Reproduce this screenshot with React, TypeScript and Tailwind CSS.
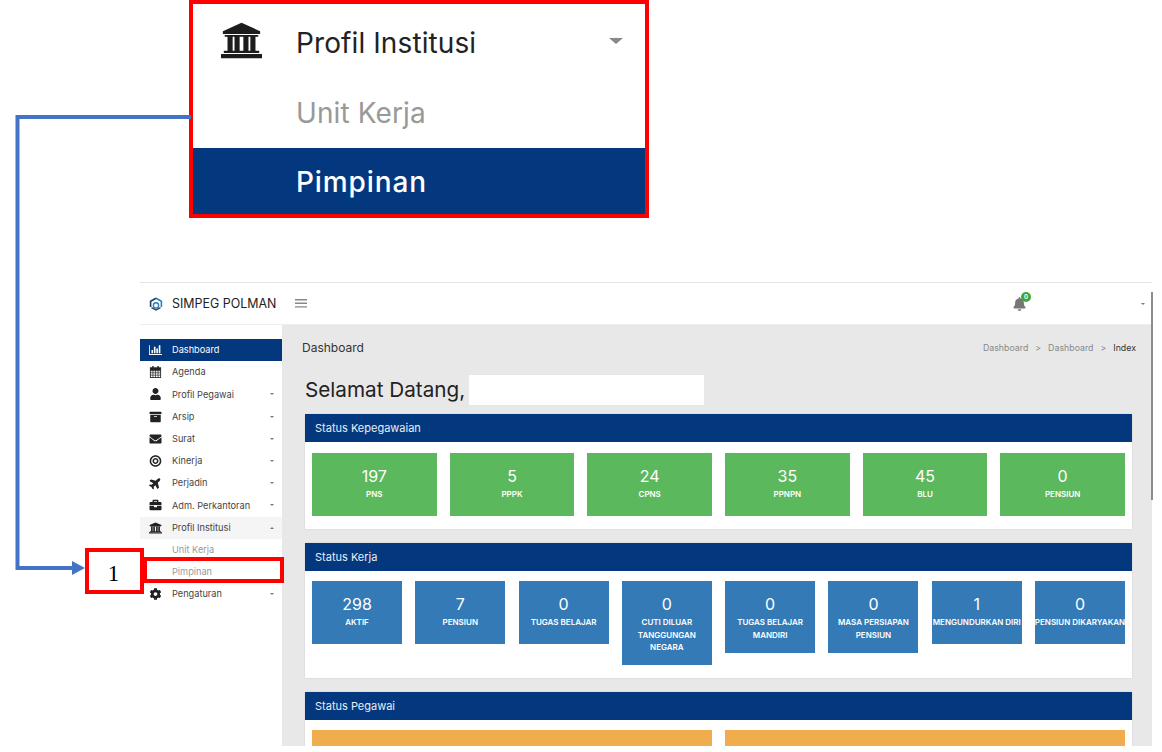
import { FaArchive, FaBell, FaBriefcase, FaBullseye, FaCog, FaEnvelope, FaPlane, FaUser } from 'react-icons/fa'
import type { IconType } from 'react-icons'

const BarChart: IconType = (props) => (
  <svg viewBox="0 0 16 14" fill="currentColor" {...(props as object)}>
    <path d="M0 1h1v11h15v1H0z" />
    <path d="M3 7h2v4H3zM6 3h2v8H6zM9 5h2v6H9zM12 1h2v10h-2z" />
  </svg>
)

const CalendarGrid: IconType = (props) => (
  <svg viewBox="0 0 14 14" fill="none" stroke="currentColor" strokeWidth="1" {...(props as object)}>
    <rect x="1" y="2" width="12" height="11.5" />
    <path d="M1 5.5h12M1 8h12M1 10.7h12M4 5.5v8M7 5.5v8M10 5.5v8" strokeWidth="0.8" />
    <path d="M1 3.8h12" strokeWidth="3" />
    <path d="M4 0v3M10 0v3" strokeWidth="1.6" />
  </svg>
)

const Bank: IconType = (props) => (
  <svg viewBox="0 0 44 38" fill="currentColor" {...(props as object)}>
    <path d="M22 0 42 9v3H2V9z" />
    <path d="M4 13h36v2H4zM7 15h5.5v15H7zM14.5 15h5.5v15h-5.5zM24 15h5.5v15H24zM31.5 15H37v15h-5.5zM3 30h38v2.5H3zM0 33.5h44V38H0z" />
  </svg>
)

const TiltedPlane: IconType = (props) => <FaPlane {...props} className={`${props.className ?? ''} -rotate-45`} />

const menu: { label: string; icon: IconType; caret?: boolean }[] = [
  { label: 'Dashboard', icon: BarChart },
  { label: 'Agenda', icon: CalendarGrid },
  { label: 'Profil Pegawai', icon: FaUser, caret: true },
  { label: 'Arsip', icon: FaArchive, caret: true },
  { label: 'Surat', icon: FaEnvelope, caret: true },
  { label: 'Kinerja', icon: FaBullseye, caret: true },
  { label: 'Perjadin', icon: TiltedPlane, caret: true },
  { label: 'Adm. Perkantoran', icon: FaBriefcase, caret: true },
]

const kepegawaian = [
  { value: '197', label: 'PNS' },
  { value: '5', label: 'PPPK' },
  { value: '24', label: 'CPNS' },
  { value: '35', label: 'PPNPN' },
  { value: '45', label: 'BLU' },
  { value: '0', label: 'PENSIUN' },
]

const kerja = [
  { value: '298', label: 'AKTIF' },
  { value: '7', label: 'PENSIUN' },
  { value: '0', label: 'TUGAS BELAJAR' },
  { value: '0', label: 'CUTI DILUAR\nTANGGUNGAN\nNEGARA' },
  { value: '0', label: 'TUGAS BELAJAR\nMANDIRI' },
  { value: '0', label: 'MASA PERSIAPAN\nPENSIUN' },
  { value: '1', label: 'MENGUNDURKAN DIRI' },
  { value: '0', label: 'PENSIUN DIKARYAKAN' },
]

function Caret({ up }: { up?: boolean }) {
  return (
    <span
      className={`h-0 w-0 border-x-[2px] border-x-transparent ${up ? 'border-b-[2px] border-b-[#777]' : 'border-t-[2px] border-t-[#777]'}`}
    />
  )
}

function MenuItem({ label, icon: Icon, caret, active }: { label: string; icon: IconType; caret?: boolean; active?: boolean }) {
  return (
    <div className={`flex h-[22.2px] items-center pl-[9px] pr-[8px] text-[9.2px] ${active ? 'bg-[#03387f] text-white' : 'text-[#444]'}`}>
      <Icon className={`h-[12px] w-[13px] shrink-0 ${active ? 'text-white' : 'text-[#222]'}`} />
      <span className="ml-[10px] flex-1">{label}</span>
      {caret && <Caret />}
    </div>
  )
}

function Card({ title, children }: { title: string; children: React.ReactNode }) {
  return (
    <div className="mb-[14px] rounded-t-[2px] bg-white shadow-[0_0_2px_rgba(0,0,0,0.12)]">
      <div className="flex h-[28px] items-center bg-[#03387f] px-[10px] pt-[1px] text-[11px] text-[#e8eef6]">{title}</div>
      {children}
    </div>
  )
}

function Tile({ value, label, color }: { value: string; label: string; color: string }) {
  return (
    <div className={`flex min-h-[63px] flex-col items-center pb-[11.5px] pt-[11px] text-center text-white ${color}`}>
      <div className="text-[16px] leading-[24px]">{value}</div>
      <div className="whitespace-pre text-[8px] font-semibold leading-[12.5px]">{label}</div>
    </div>
  )
}

export default function App() {
  return (
    <div className="relative h-[752px] w-[1162px] overflow-hidden bg-white font-['Inter',sans-serif]">
      {/* dashboard screenshot */}
      <div className="ml-[140px] mt-[282px] inline-block h-[464px] w-[1012px] overflow-hidden border-t border-[#e4e4e4] align-top">
        <header className="flex h-[42px] items-center border-b border-[#eee] bg-white pl-[9px] pr-[7px]">
          <svg viewBox="0 0 14 14" className="h-[14px] w-[14px]" fill="none">
            <path d="M7 1.2 12.4 4.3V10" stroke="#2f7fb8" strokeWidth="1.6" />
            <path d="M1.6 10V4.3L7 1.2" stroke="#23415f" strokeWidth="1.6" />
            <circle cx="7" cy="8.4" r="2.6" stroke="#2f7fb8" strokeWidth="1.4" />
            <path d="M2.5 10.6 7 13l4.5-2.4" stroke="#23415f" strokeWidth="1.2" />
          </svg>
          <span className="ml-[9px] pt-[1px] text-[12.45px] text-[#222]">SIMPEG POLMAN</span>
          <svg viewBox="0 0 12 9" className="ml-[18.5px] h-[9px] w-[12px]" fill="#888">
            <path d="M0 0h12v1.4H0zM0 3.6h12V5H0zM0 7.2h12v1.4H0z" />
          </svg>
          <div className="relative ml-auto mr-[115px]">
            <FaBell className="h-[14px] w-[13px] text-[#777]" />
            <span className="absolute -right-[5px] -top-[5px] flex h-[10px] w-[10px] items-center justify-center rounded-full bg-[#3aa83a] text-[6px] font-bold text-white">0</span>
          </div>
          <Caret />
        </header>

        <div className="flex h-[421px]">
          <aside className="w-[142px] shrink-0 bg-white pt-[14px]">
            {menu.map((item, i) => (
              <MenuItem key={item.label} {...item} active={i === 0} />
            ))}
            <div className="flex h-[22.2px] items-center bg-[#f5f5f5] pl-[9px] pr-[8px] text-[9.2px] text-[#444]">
              <Bank className="h-[12px] w-[13px] shrink-0 text-[#222]" />
              <span className="ml-[10px] flex-1">Profil Institusi</span>
              <Caret up />
            </div>
            <div className="flex h-[22.2px] items-center pl-[32px] text-[9.2px] text-[#999]">Unit Kerja</div>
            <div className="flex h-[22.2px] items-center pl-[32px] text-[9.2px] text-[#999]">Pimpinan</div>
            <MenuItem label="Pengaturan" icon={FaCog} caret />
          </aside>

          <main className="flex-1 overflow-hidden bg-[#e8e8e8]">
            <div className="flex h-[44px] items-center justify-between pl-[20px] pr-[16px] pt-[2px]">
              <span className="text-[12px] text-[#333]">Dashboard</span>
              <div className="flex items-center gap-[7px] text-[8.8px] text-[#888]">
                <span>Dashboard</span>
                <span>&gt;</span>
                <span>Dashboard</span>
                <span>&gt;</span>
                <span className="text-[#333]">Index</span>
              </div>
            </div>

            <div className="ml-[23px] mr-[20px] mt-[6px]">
              <div className="mb-[9px] flex h-[30px] items-center">
                <span className="text-[20.7px] text-[#222]">Selamat Datang,</span>
                <div className="ml-[4px] h-[30px] w-[235px] bg-white" />
              </div>

              <Card title="Status Kepegawaian">
                <div className="grid grid-cols-6 items-start gap-x-[13px] px-[7px] pb-[13px] pt-[10.5px]">
                  {kepegawaian.map((t) => (
                    <Tile key={t.label} {...t} color="bg-[#5cb85c]" />
                  ))}
                </div>
              </Card>

              <Card title="Status Kerja">
                <div className="grid grid-cols-8 items-start gap-x-[13.3px] px-[7px] pb-[13px] pt-[10.5px]">
                  {kerja.map((t) => (
                    <Tile key={t.label} {...t} color="bg-[#337ab7]" />
                  ))}
                </div>
              </Card>

              <Card title="Status Pegawai">
                <div className="grid grid-cols-2 gap-x-[13px] px-[7px] pt-[10px]">
                  <div className="h-[63px] bg-[#f0ad4e]" />
                  <div className="h-[63px] bg-[#f0ad4e]" />
                </div>
              </Card>
            </div>
          </main>
        </div>
      </div>

      {/* window scrollbar */}
      <div className="absolute left-[1151px] top-[292px] h-[208px] w-[2px] bg-[#8c8c8c]" />

      {/* enlarged menu callout */}
      <div className="absolute left-[189px] top-0 w-[460px] border-4 border-[#ff0000] bg-white">
        <div className="flex h-[78px] items-center pl-[28px] pr-[22px] text-[#222]">
          <Bank className="mb-[5px] h-[37px] w-[41px] text-[#1c1c1c]" />
          <span className="ml-[34px] flex-1 text-[28px] tracking-[0.1px]">Profil Institusi</span>
          <span className="mb-[4px] h-0 w-0 border-x-[7px] border-t-[6px] border-x-transparent border-t-[#888]" />
        </div>
        <div className="flex h-[66px] items-center pl-[103px] pb-[4px] text-[28px] tracking-[0.1px] text-[#999]">Unit Kerja</div>
        <div className="flex h-[66px] items-center bg-[#03387f] pl-[103px] pt-[1px] text-[28px] font-medium tracking-[0.9px] text-white">Pimpinan</div>
      </div>

      {/* connector arrow */}
      <svg className="absolute left-0 top-0 h-[752px] w-[200px]" viewBox="0 0 200 752" fill="none">
        <path d="M191 117H17.5V568H74" stroke="#4472c4" strokeWidth="4" />
        <path d="M72 561l13 7-13 7z" fill="#4472c4" />
      </svg>

      {/* number label and highlight */}
      <div className="absolute left-[85px] top-[548px] flex h-[46px] w-[59px] items-center justify-center border-4 border-[#ff0000] bg-white pr-[2px] pt-[6px] font-['Liberation_Serif',serif] text-[23px] text-black">
        1
      </div>
      <div className="absolute left-[143px] top-[557px] h-[26px] w-[141px] border-4 border-[#ff0000]" />
    </div>
  )
}
